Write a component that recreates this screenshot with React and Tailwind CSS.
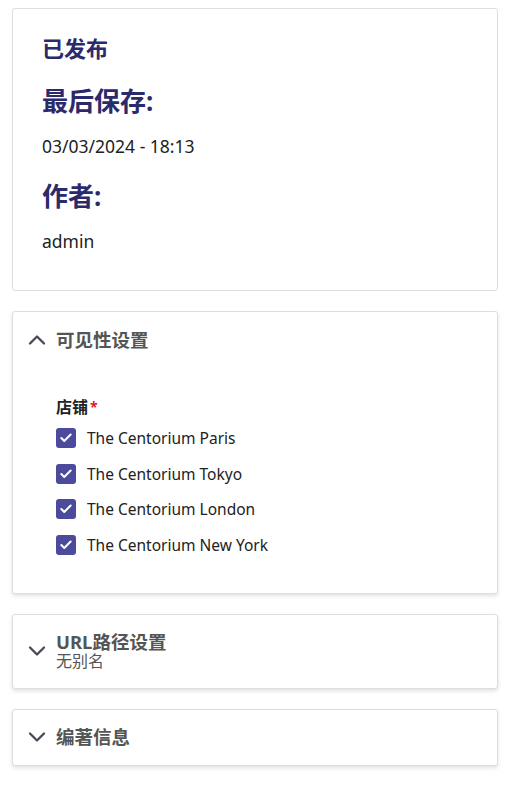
import { ChevronUp, ChevronDown, Check } from "lucide-react";

const stores = [
  "The Centorium Paris",
  "The Centorium Tokyo",
  "The Centorium London",
  "The Centorium New York",
];

function Section({ open, title, subtitle, children }) {
  const Icon = open ? ChevronUp : ChevronDown;
  return (
    <div className="bg-white rounded-[3px] border border-[#dedede] shadow-[0_2px_4px_rgba(0,0,0,0.12)]">
      <div className={`flex items-center gap-[5px] pl-[10px] pr-4 ${subtitle ? "h-[73px]" : "h-[55px]"}`}>
        <Icon className="w-[28px] h-[28px] text-[#4a4a55] shrink-0" strokeWidth={2} />
        <div className="flex flex-col">
          <span className="text-[18.5px] leading-[20px] font-bold text-[#555]">{title}</span>
          {subtitle && <span className="text-[16px] leading-[18px] text-[#555]">{subtitle}</span>}
        </div>
      </div>
      {children}
    </div>
  );
}

export default function App() {
  return (
    <div
      className="bg-white min-h-screen pl-3 pr-4 pt-2 flex flex-col gap-5"
      style={{ fontFamily: '"Noto Sans", "Noto Sans CJK SC", sans-serif' }}
    >
      {/* Status card */}
      <div className="bg-white rounded-[3px] border border-[#dedede] px-[29px] pt-[24px] h-[283px]">
        <h3 className="text-[22px] leading-[30px] font-bold text-[#2b2a6b]">已发布</h3>
        <h2 className="mt-[22px] text-[26px] leading-[32px] font-bold text-[#2b2a6b]">最后保存:</h2>
        <p className="mt-[17px] text-[17.5px] leading-[24px] text-[#222]">03/03/2024 - 18:13</p>
        <h2 className="mt-[22px] text-[26px] leading-[32px] font-bold text-[#2b2a6b]">作者:</h2>
        <p className="mt-[17px] text-[17.5px] leading-[24px] text-[#222]">admin</p>
      </div>

      {/* Visibility */}
      <Section open title="可见性设置">
        <div className="pl-[43px] pt-[28px] pb-[38px]">
          <div className="flex items-center text-[16px] leading-[24px] font-bold text-[#222]">
            店铺<span className="text-[#e0202a] ml-[2px] text-[14px]">*</span>
          </div>
          <div className="flex flex-col gap-[15.5px] mt-[9px]">
            {stores.map((s) => (
              <label key={s} className="flex items-center gap-[11px]">
                <span className="w-[20px] h-[20px] rounded-[3px] bg-[#4b4a9c] flex items-center justify-center">
                  <Check className="w-[14px] h-[14px] text-white" strokeWidth={3.5} />
                </span>
                <span className="text-[15.5px] leading-[20px] text-[#222]">{s}</span>
              </label>
            ))}
          </div>
        </div>
      </Section>

      {/* URL alias */}
      <Section title="URL路径设置" subtitle="无别名" />

      {/* Authoring info */}
      <Section title="编著信息" />
    </div>
  );
}
